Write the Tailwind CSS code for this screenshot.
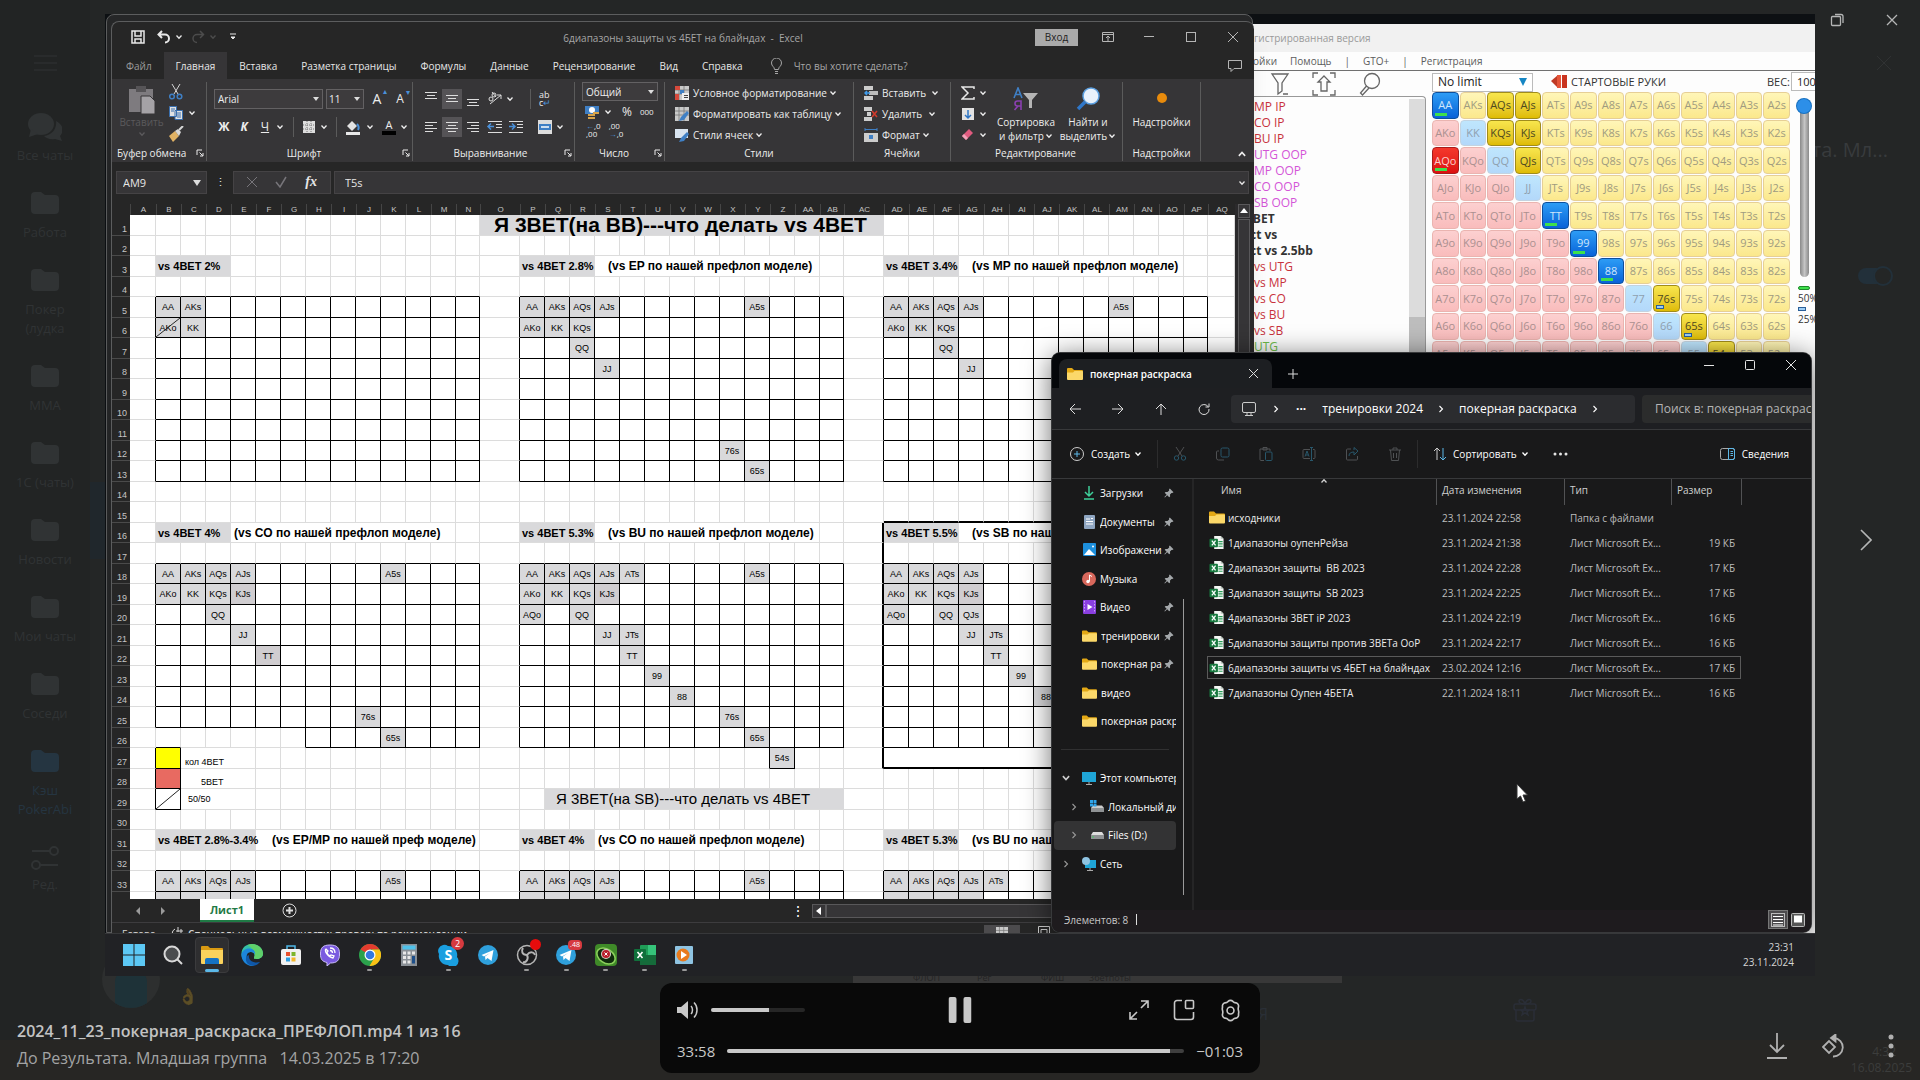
<!DOCTYPE html>
<html lang="ru">
<head>
    <meta charset="UTF-8">
    <meta name="viewport" content="width=device-width, initial-scale=1.0">
    <title>Просмотр видео</title>
    <script src="https://cdn.jsdelivr.net/npm/@tailwindcss/browser@4"></script>
</head>
<body class="relative h-screen overflow-hidden bg-[#242626] font-['Open_Sans','Noto_Sans',sans-serif] text-[10px] leading-4 text-white">

    <!-- Общие иконки -->
    <svg class="hidden">
        <symbol id="chev" viewBox="0 0 8 8"><path d="M1.5 2.5 4 5.2 6.5 2.5" fill="none" stroke="currentColor" stroke-width="1.3"/></symbol>
        <symbol id="chevRight" viewBox="0 0 8 8"><path d="M2.5 1 5.5 4 2.5 7" fill="none" stroke="currentColor" stroke-width="1.1"/></symbol>
        <symbol id="folder" viewBox="0 0 16 14"><path d="M0 2a1 1 0 0 1 1-1h4l2 2h8a1 1 0 0 1 1 1v3H0z" fill="#e3a815"/><path d="M0 5.5h6L7.5 4H15a1 1 0 0 1 1 1v7a1 1 0 0 1-1 1H1a1 1 0 0 1-1-1z" fill="#fbd869"/></symbol>
        <symbol id="xls" viewBox="0 0 16 16"><path d="M5 1h7l3 3v11H5z" fill="#f5f7f5"/><path d="M12 1v3h3z" fill="#b7c4bb"/><path d="M9.5 7H14M9.5 9.5H14M9.5 12H14" stroke="#2a9d58" stroke-width="1.3"/><rect x="0" y="4" width="9" height="9" rx="1" fill="#18793f"/><path d="m2.500 6 4 5m0-5-4 5" stroke="#fff" stroke-width="1.4"/></symbol>
        <symbol id="pin" viewBox="0 0 10 10"><path d="M5.8.5 9.500 4.200 8.300 5.100l-.8-.2-1.500 1.600.1 1.900-.9.900-2-2L.900 9.500.400 9l2.200-2.300L.700 4.800l.9-.9 1.900.1L5.200 2.400 5 1.600z" fill="#a4a8ab"/></symbol>
        <symbol id="launch" viewBox="0 0 8 8"><path d="M1 6V1h5M3.500 3.500 6.800 6.800M7 4v3H4" fill="none" stroke="currentColor"/></symbol>
        <symbol id="dirFolder" viewBox="0 0 28 22"><path d="M0 4a4 4 0 0 1 4-4h6l4 3h10a4 4 0 0 1 4 4v11a4 4 0 0 1-4 4H4a4 4 0 0 1-4-4z" fill="currentColor"/></symbol>
        <symbol id="sheetIcon" viewBox="0 0 14 14"><path d="M0 0h14v14H0z" fill="#c9c9c9"/><path d="M0 4h14M0 8h14M4 0v14M9 0v14" stroke="#777" stroke-width=".8"/></symbol>
    </svg>

    <!-- Затемнённый чат под просмотром -->
    <nav id="folders" class="absolute inset-y-0 left-0 w-[90px] bg-[#222424] pt-[55px] text-center text-[13px] leading-[19px] text-[#303334]"></nav>
    <div class="absolute inset-x-0 bottom-0 h-10 bg-[#272624]"></div>
    <div class="absolute left-[90px] top-[482px] h-[77px] w-4 bg-[#20272c]"></div>
    <div class="absolute left-[853px] top-[970px] flex h-[13px] w-[489px] bg-[#383838] pl-11 text-[9px] text-[#242424]"><span class="w-16 pl-4">ФЛОП</span><span class="w-16 pl-4">Рег</span><span class="w-16 pl-4">ФИШ</span><span>3бетпоты</span></div>
    <div class="absolute left-[102px] top-[950px] size-[58px] overflow-hidden rounded-full bg-[#2d2f2f]"><div class="mx-auto mt-5 h-10 w-8 rounded-t-xl bg-[#1e3238]"></div></div>
    <div class="absolute left-[178px] top-[986px] text-base leading-5 opacity-25">👌</div>
    <div class="absolute right-8 top-[136px] text-xl leading-7 text-[#383b3d]">та. Мл...</div>
    <svg class="absolute right-6 top-[264px] h-6 w-10" viewBox="0 0 40 24" fill="none"><rect x="2" y="4" width="30" height="16" rx="8" fill="#22303a"/><circle cx="27" cy="12" r="9" fill="#242626" stroke="#22303a" stroke-width="2"/></svg>
    <svg class="absolute right-7 top-[55px] size-4 text-[#303233]" viewBox="0 0 16 16"><path d="m1 1 14 14M15 1 1 15" stroke="currentColor"/></svg>
    <svg class="absolute left-[1513px] top-[998px] size-6 text-[#2a2e37]" viewBox="0 0 24 24" fill="none" stroke="currentColor" stroke-width="1.5"><rect x="1" y="6" width="22" height="6" rx="2"/><path d="M3 12v9a2 2 0 0 0 2 2h14a2 2 0 0 0 2-2v-9M12 6C9 6 6 5 6 3s4-3 6 3c2-6 6-5 6-3s-3 3-6 3m0 3 1 3h3l-2 2 1 3-3-2-3 2 1-3-2-2h3z"/></svg>
    <div class="absolute bottom-1 right-2 text-right text-xs text-[#3c3d3c]"><p class="pr-4">4:32</p><p>16.08.2025</p></div>
    <div class="absolute left-[1258px] top-[1002px] text-base text-[#2a2f36]">Я</div>

    <!-- Кнопки окна -->
    <div class="absolute right-5 top-3 flex items-center gap-[38px] text-[#b5b6b6]">
        <button aria-label="Развернуть"><svg class="size-4" viewBox="0 0 16 16" fill="none" stroke="currentColor" stroke-width="1.3"><rect x="1.500" y="4.500" width="9" height="9" rx="1"/><path d="M5 2.500h6a2 2 0 0 1 2 2V11"/></svg></button>
        <button aria-label="Закрыть"><svg class="size-4" viewBox="0 0 16 16" fill="none" stroke="currentColor" stroke-width="1.3"><path d="m3 3 10 10M13 3 3 13"/></svg></button>
    </div>
    <button aria-label="Следующее" class="absolute right-12 top-[528px] text-[#b5b6b6]"><svg class="h-6 w-3" viewBox="0 0 12 24" fill="none" stroke="currentColor" stroke-width="1.6"><path d="m1 2 10 10L1 22"/></svg></button>

    <!-- Кадр видео -->
    <main class="absolute left-[105px] top-[14px] h-[962px] w-[1710px] overflow-hidden bg-[#0d1013]">

        <!-- Окно с диапазонами рук -->
        <section class="absolute left-[1100px] right-0 top-[10px] h-[909px] bg-[#fdfdfd] font-['Open_Sans'] text-[#333]">
            <div class="flex h-7 items-center bg-[#f1f1f1] pl-[49px] text-[#9a9a9a]">гистрированная версия</div>
            <div class="flex h-[19px] items-center gap-[13px] border-b border-[#707070] pl-[44px] text-[#5c5c5c]"><span class="w-7 text-right">ойки</span><span>Помощь</span><span>|</span><span>GTO+</span><span>|</span><span>Регистрация</span></div>
            <div class="flex pl-[49px]">
                <div class="w-[172px]">
                    <div class="flex h-[25px] items-center gap-[22px] pl-4 text-[#666]">
                        <svg class="h-6 w-5" viewBox="0 0 20 24" fill="none" stroke="currentColor" stroke-width="1.3"><path d="M2 2h16l-6 9v8l-4 3V11zM13 22h5"/></svg>
                        <svg class="size-6" viewBox="0 0 24 24" fill="none" stroke="currentColor" stroke-width="1.3"><path d="M1 6V1h5M18 1h5v5M23 18v5h-5M6 23H1v-5M12 4l6 6h-3v9H9v-9H6z"/></svg>
                        <svg class="size-6" viewBox="0 0 24 24" fill="none" stroke="currentColor" stroke-width="1.3"><circle cx="14" cy="9" r="7.500"/><path d="m8.500 14-6 7 2 2 6.500-7"/></svg>
                    </div>
                    <div class="flex h-[500px] overflow-hidden rounded-tr border-r border-t border-[#999] pt-[2px]">
                        <ul id="ranges" class="w-[156px] text-xs leading-4 text-[#c8323c]"></ul>
                        <div class="w-4 bg-[#dcdcdc] pt-[218px]"><div class="h-40 bg-[#bdbdbd]"></div></div>
                    </div>
                </div>
                <div class="w-[364px] pl-[6px]">
                    <div class="flex h-[21px] items-center pt-px text-xs">
                        <select aria-label="Лимит" class="h-[19px] w-[101px] appearance-none border border-[#bbb] bg-white pl-[5px] leading-4 text-[#222]"><option>No limit</option></select>
                        <svg class="-ml-[14px] size-2" viewBox="0 0 8 8"><path d="M0 0h8L4 8z" fill="#1686c4"/></svg>
                        <svg class="ml-6 h-[14px] w-4" viewBox="0 0 16 14"><path d="M0 6 7 0v13z" fill="#bf3a25"/><rect x="6" width="4" height="13" fill="#e55438"/><rect x="11" width="5" height="13" fill="#c9341f"/></svg>
                        <span class="ml-1 text-[11px]">СТАРТОВЫЕ РУКИ</span>
                        <label for="weight" class="ml-auto text-[11px]">ВЕС:</label>
                    </div>
                    <div id="hands" class="grid h-[358px] w-[358px] grid-cols-13 grid-rows-13 gap-px text-[11px]"></div>
                </div>
                <div class="w-6">
                    <input id="weight" value="100" class="ml-px mt-px h-[19px] w-9 border border-[#bbb] bg-white pl-[5px] text-[11px] text-[#222]">
                    <div class="relative ml-[6px] mt-2 h-[178px] w-4"><div class="mx-auto h-full w-[9px] rounded-full bg-gradient-to-r from-[#8a8a8a] via-[#c5c5c5] to-[#8a8a8a]"></div><div class="absolute left-px top-0 size-[14px] rounded-full bg-[#2d8fe8] ring-1 ring-[#1670c0]"></div></div>
                    <div class="ml-2 mt-[9px] h-1 w-3 rounded-sm border border-[#1d8a2a] bg-[#3ee04c]"></div>
                    <div class="ml-2 leading-[17px]">50%</div>
                    <div class="ml-2 h-1 w-2 border border-[#2a5f98] bg-[#9ccdf5]"></div>
                    <div class="ml-2 leading-[17px]">25%</div>
                </div>
            </div>
        </section>

        <!-- Второе окно Excel, от него видна только рамка -->
        <div class="absolute left-px top-0 h-[919px] w-[1147px] rounded-t-lg border border-[#5c5d5e] bg-[#262728]"></div>

        <!-- Excel -->
        <section class="absolute left-[6px] top-[7px] flex h-[912px] w-[1143px] flex-col overflow-hidden rounded-t-lg border-l border-t border-[#5c5d5e] bg-[#262626] shadow-xl">
            <header class="relative flex h-[30px] shrink-0 items-center pl-[19px]">
                <div class="flex items-center gap-[6px] text-[#e8e8e8]">
                    <button aria-label="Сохранить"><svg class="size-[14px]" viewBox="0 0 14 14" fill="none" stroke="currentColor" stroke-width="1.5"><path d="M1 1h12v12H1zM4 1v5h6V1M4 13V9h6v4"/></svg></button>
                    <button aria-label="Отменить" class="ml-[6px] flex items-center gap-1"><svg class="h-4 w-[14px]" viewBox="0 0 14 14" fill="none" stroke="currentColor" stroke-width="2"><path d="M5 1 1.500 4.500 5 8M1.500 4.500H8a4 4 0 0 1 0 8"/></svg><svg class="size-2"><use href="#chev"/></svg></button>
                    <button aria-label="Повторить" class="ml-[2px] flex items-center gap-1 text-[#4c4c4c]"><svg class="h-4 w-[14px]" viewBox="0 0 14 14" fill="none" stroke="currentColor" stroke-width="1.5"><path d="m9 1 3.500 3.500L9 8M12.500 4.500H6a4 4 0 0 0 0 8"/></svg><svg class="size-2"><use href="#chev"/></svg></button>
                    <svg class="ml-[6px] size-2" viewBox="0 0 8 8"><path d="M1 1h6M2 4h4L4 6z" fill="currentColor" stroke="currentColor"/></svg>
                </div>
                <h1 class="absolute inset-x-0 top-2 text-center text-[#a5a5a5]">6диапазоны защиты vs 4БЕТ на блайндах&nbsp; -&nbsp; Excel</h1>
                <div class="ml-auto flex items-center pr-4 text-[#b5b5b5]">
                    <button class="mr-6 h-[17px] w-[43px] bg-[#aaaaaa] text-[#222]">Вход</button>
                    <svg class="mr-[30px] size-3" viewBox="0 0 12 12" fill="none" stroke="currentColor"><path d="M.5 1.500h11v9H.5zM.5 3.500h11M6 10V5M4 7l2-2 2 2"/></svg>
                    <svg class="mr-8 h-3 w-[10px]" viewBox="0 0 10 12" fill="none" stroke="currentColor"><path d="M0 5.500h10"/></svg>
                    <svg class="mr-8 size-[10px]" viewBox="0 0 10 10" fill="none" stroke="currentColor"><rect x=".5" y=".5" width="9" height="9"/></svg>
                    <svg class="size-[10px]" viewBox="0 0 10 10" fill="none" stroke="currentColor"><path d="m0 0 10 10M10 0 0 10"/></svg>
                </div>
            </header>
            <nav class="flex h-[27px] shrink-0 items-stretch pl-[2px] text-[#e6e6e6] *:px-3">
                <button class="text-[#9b9b9b]">Файл</button>
                <button class="bg-[#363537]">Главная</button>
                <button>Вставка</button>
                <button>Разметка страницы</button>
                <button>Формулы</button>
                <button>Данные</button>
                <button>Рецензирование</button>
                <button>Вид</button>
                <button>Справка</button>
                <button class="ml-1 flex items-center gap-3 text-[#a5a5a5]"><svg class="h-4 w-[11px]" viewBox="0 0 11 16" fill="none" stroke="currentColor"><path d="M3.500 11.500c0-3-3-3-3-6.500a5 5 0 0 1 10 0c0 3.500-3 3.500-3 6.500zM4 13.500h3M4 15.500h3"/></svg>Что вы хотите сделать?</button>
                <button aria-label="Примечания" class="ml-auto"><svg class="size-[14px]" viewBox="0 0 14 14" fill="none" stroke="#b5b5b5"><path d="M.5 1.500h13v8H6l-3 3v-3H.5z"/></svg></button>
            </nav>

            <!-- Лента -->
            <div class="relative flex h-[83px] shrink-0 bg-[#363537] pt-[3px] pb-px text-[#ededed]">
                <div class="flex w-[95px] flex-col border-r border-[#5b5b5b]">
                    <div class="flex flex-1 gap-[5px] pl-2">
                        <button class="flex w-[43px] flex-col items-center text-[#5b5a5c]"><svg class="mt-1 h-7 w-[26px]" viewBox="0 0 26 28"><path d="M0 3h24v23H0z" fill="#7e7b7f"/><path d="M7 0h10v6H7z" fill="#565457"/><path d="M12 10h9l5 5v13H12z" fill="#a5a2a6" stroke="#363537"/></svg>Вставить<svg class="size-2"><use href="#chev"/></svg></button>
                        <div class="flex flex-col gap-[5px] pt-[2px]">
                            <svg class="size-4" viewBox="0 0 16 16" fill="none" stroke="#d5d5d5"><path d="m4 0 6 10M12 0 6 10"/><circle cx="4" cy="12.500" r="2.300" stroke="#3f7fc4" stroke-width="1.5"/><circle cx="11.500" cy="12.500" r="2.300" stroke="#3f7fc4" stroke-width="1.5"/></svg>
                            <span class="flex items-center gap-1"><svg class="size-4" viewBox="0 0 16 16" fill="#e2e2e2" stroke="#3a6fae"><path d="M1.500 1.500h7v10h-7zM7 5.500h7.500v9H7z"/><path d="M3 4h4M3 6h3M9 8h4M9 10h4M9 12h4"/></svg><svg class="size-2"><use href="#chev"/></svg></span>
                            <svg class="size-4" viewBox="0 0 16 16"><path d="m1 10 6-5 4 5-6 6z" fill="#e0b264"/><path d="m7 5 3-2 3 3-2 4z" fill="#d8d8d8"/><path d="m11 4 4-4" stroke="#d8d8d8" stroke-width="2"/></svg>
                        </div>
                    </div>
                    <div class="flex items-center justify-between pl-[5px] pr-[2px]">Буфер обмена<svg class="size-2"><use href="#launch"/></svg></div>
                </div>
                <div class="flex w-[206px] flex-col border-r border-[#5b5b5b] pl-[7px] pr-[2px]">
                    <div class="mt-[7px] flex h-5 items-center gap-[3px]">
                        <div class="relative"><select aria-label="Шрифт" class="h-5 w-[109px] appearance-none border border-[#636163] bg-[#3d3b3d] pl-[3px] text-[10px]"><option>Arial</option></select><svg class="absolute right-[3px] top-[6px] size-2" viewBox="0 0 8 8"><path d="M1 2h6L4 6z" fill="#ddd"/></svg></div>
                        <div class="relative"><select aria-label="Размер" class="h-5 w-[38px] appearance-none border border-[#636163] bg-[#3d3b3d] pl-[2px] text-[10px]"><option>11</option></select><svg class="absolute right-[3px] top-[6px] size-2" viewBox="0 0 8 8"><path d="M1 2h6L4 6z" fill="#ddd"/></svg></div>
                        <button class="relative w-5 text-sm">A<span class="absolute -top-1 right-0 text-[8px] text-[#4a90d9]">▴</span></button>
                        <button class="relative w-5 text-xs">A<span class="absolute -top-1 right-0 text-[8px] text-[#4a90d9]">▾</span></button>
                    </div>
                    <div class="mt-2 flex h-5 items-center text-xs">
                        <button class="w-5 font-bold">Ж</button><button class="w-5 font-bold italic">К</button><button class="w-[22px] underline">Ч</button><svg class="mr-1 size-2"><use href="#chev"/></svg>
                        <span class="mx-[5px] h-5 w-px bg-[#5b5b5b]"></span>
                        <svg class="ml-1 size-3" viewBox="0 0 12 12"><path d="M0 0h12v12H0z" fill="#ddd"/><path d="M0 4h12M0 8h12M4 0v12M8 0v12" stroke="#777" stroke-dasharray="1 1"/></svg><svg class="ml-[5px] size-2"><use href="#chev"/></svg>
                        <span class="mx-2 h-5 w-px bg-[#5b5b5b]"></span>
                        <svg class="size-4" viewBox="0 0 16 16"><path d="m2 7 5-5 5 5-5 5z" fill="#e2e2e2"/><path d="M12 5c2 2 2 4 1 6" stroke="#4a90d9" stroke-width="2" fill="none"/><path d="M1 13h14v3H1z" fill="#e8e8e8"/></svg><svg class="ml-[5px] size-2"><use href="#chev"/></svg>
                        <span class="ml-2 w-[14px] border-b-4 border-black text-center text-[11px] leading-3">A</span><svg class="ml-1 size-2"><use href="#chev"/></svg>
                    </div>
                    <div class="mt-auto flex items-center"><span class="flex-1 pr-2 text-center">Шрифт</span><svg class="size-2"><use href="#launch"/></svg></div>
                </div>
                <div class="flex w-[162px] flex-col border-r border-[#5b5b5b] pl-2 pr-[2px]">
                    <div class="mt-[7px] flex h-5 items-center">
                        <svg class="size-5" viewBox="0 0 20 20" stroke="#ddd"><path d="M4 3.500h12M6 6.500h8M4 9.500h12"/></svg>
                        <svg class="ml-px size-5 bg-[#555356]" viewBox="0 0 20 20" stroke="#ddd"><path d="M4 6.500h12M6 9.500h8M4 12.500h12"/></svg>
                        <svg class="ml-px size-5" viewBox="0 0 20 20" stroke="#ddd"><path d="M4 10.500h12M6 13.500h8M4 16.500h12"/></svg>
                        <svg class="ml-[2px] size-5" viewBox="0 0 20 20" fill="none" stroke="#ddd"><circle cx="6" cy="10" r="2"/><circle cx="9" cy="6" r="2"/><path d="m7 3 4 5M5 15 16 6M16 10V6h-4"/></svg><svg class="ml-px size-2"><use href="#chev"/></svg>
                        <span class="ml-4 h-5 w-px bg-[#5b5b5b]"></span><span class="ml-2 text-[9px] leading-2">ab<br>c<span class="text-[#4a90d9]">↵</span></span>
                    </div>
                    <div class="mt-2 flex h-5 items-center">
                        <svg class="size-5" viewBox="0 0 20 20" stroke="#ddd"><path d="M4 5.500h12M4 8.500h8M4 11.500h12M4 14.500h8"/></svg>
                        <svg class="ml-px size-5 bg-[#555356]" viewBox="0 0 20 20" stroke="#ddd"><path d="M4 5.500h12M6 8.500h8M4 11.500h12M6 14.500h8"/></svg>
                        <svg class="ml-px size-5" viewBox="0 0 20 20" stroke="#ddd"><path d="M4 5.500h12M8 8.500h8M4 11.500h12M8 14.500h8"/></svg>
                        <svg class="ml-[2px] size-5" viewBox="0 0 20 20" stroke="#ddd" fill="none"><path d="M3 4.500h14M11 7.500h6M11 10.500h6M3 15.500h14"/><path d="M9 9.500H3m3-3-3 3 3 3" stroke="#4a90d9" stroke-width="1.5"/></svg>
                        <svg class="ml-px size-5" viewBox="0 0 20 20" stroke="#ddd" fill="none"><path d="M3 4.500h14M11 7.500h6M11 10.500h6M3 15.500h14"/><path d="M3 9.500h6m-3-3 3 3-3 3" stroke="#4a90d9" stroke-width="1.5"/></svg>
                        <svg class="ml-3 size-[14px]" viewBox="0 0 14 14"><path d="M0 0h14v14H0z" fill="#ddd"/><path d="M1 4h12v6H1z" fill="#3f7fc4"/><path d="M3 7h8" stroke="#fff" stroke-width="1.5"/></svg><svg class="ml-1 size-2"><use href="#chev"/></svg>
                    </div>
                    <div class="mt-auto flex items-center"><span class="flex-1 pr-1 text-center">Выравнивание</span><svg class="size-2"><use href="#launch"/></svg></div>
                </div>
                <div class="flex w-[90px] flex-col border-r border-[#5b5b5b] pl-[7px] pr-[2px]">
                    <div class="relative w-[76px]"><select aria-label="Формат числа" class="h-[19px] w-[76px] appearance-none border border-[#636163] bg-[#3d3b3d] pl-[3px] text-[10px]"><option>Общий</option></select><svg class="absolute right-[3px] top-[6px] size-2" viewBox="0 0 8 8"><path d="M1 2h6L4 6z" fill="#ddd"/></svg></div>
                    <div class="mt-[2px] flex h-[18px] items-center"><svg class="ml-[3px] size-[15px]" viewBox="0 0 15 15"><path d="M0 1h14v8H0z" fill="#3f7fc4"/><circle cx="7" cy="5" r="3" fill="#fff"/><path d="M3 9h7v2H3zM3 12h7v2H3zM8 7h6v2H8z" fill="#d9a44a"/></svg><svg class="ml-1 size-2"><use href="#chev"/></svg><span class="ml-[10px] text-xs">%</span><span class="ml-2 text-[8px]">000</span></div>
                    <div class="mt-px flex h-5 gap-2 pl-1 text-[8px] leading-2"><span><span class="text-[#4a90d9]">←</span>,0<br>,00</span><span>,00<br><span class="text-[#4a90d9]">→</span>,0</span></div>
                    <div class="mt-auto flex items-center"><span class="flex-1 pr-2 text-center">Число</span><svg class="size-2"><use href="#launch"/></svg></div>
                </div>
                <div class="flex w-[189px] flex-col border-r border-[#5b5b5b] px-[10px]">
                    <button class="flex h-[21px] items-center"><svg class="size-[14px]" viewBox="0 0 14 14"><use href="#sheetIcon"/><path d="M0 0h5v4H0zM0 8h4v6H0z" fill="#d64a3c"/><path d="M5 4h4v4H5z" fill="#3f7fc4"/><path d="M7 7h7v7H7z" fill="#eee"/><path d="M9 9.500h4M9 11.500h4" stroke="#444"/></svg><span class="ml-1">Условное форматирование</span><svg class="ml-[2px] size-2"><use href="#chev"/></svg></button>
                    <button class="flex h-[21px] items-center"><svg class="size-[14px]" viewBox="0 0 14 14"><use href="#sheetIcon"/><path d="m6 10 6-6 2 2-5 7-5 1z" fill="#3f7fc4"/></svg><span class="ml-1">Форматировать как таблицу</span><svg class="ml-[2px] size-2"><use href="#chev"/></svg></button>
                    <button class="flex h-[21px] items-center"><svg class="size-[14px]" viewBox="0 0 14 14"><path d="M0 1h13v9H0z" fill="#d8e3ee"/><path d="m6 10 6-6 2 2-5 7-5 1z" fill="#3f7fc4"/></svg><span class="ml-1">Стили ячеек</span><svg class="ml-[2px] size-2"><use href="#chev"/></svg></button>
                    <div class="mt-auto text-center">Стили</div>
                </div>
                <div class="flex w-[97px] flex-col border-r border-[#5b5b5b] px-[10px]">
                    <button class="flex h-[21px] items-center"><svg class="size-[14px]" viewBox="0 0 14 14"><path d="M0 0h9v4H0zM0 10h9v4H0z" fill="#ccc"/><path d="M5 5h9v4H5z" fill="#bbb"/><path d="M6 7H1m2-2L1 7l2 2" stroke="#3f9bea" stroke-width="1.5" fill="none"/></svg><span class="ml-1">Вставить</span><svg class="ml-auto mr-px size-2"><use href="#chev"/></svg></button>
                    <button class="flex h-[21px] items-center"><svg class="size-[14px]" viewBox="0 0 14 14"><path d="M0 0h8v4H0zM0 10h8v4H0zM3 5h4v4H3z" fill="#ccc"/><path d="m8 4 5 6m0-6-5 6" stroke="#d03a2c" stroke-width="1.6"/></svg><span class="ml-1">Удалить</span><svg class="ml-auto mr-1 size-2"><use href="#chev"/></svg></button>
                    <button class="flex h-[21px] items-center"><svg class="size-[14px]" viewBox="0 0 14 14"><path d="M0 5h14v9H0z" fill="#ccc"/><path d="M5 7h4v4H5z" fill="#3f7fc4"/><path d="M1 0v3M13 0v3M1 1.500h12" stroke="#3f7fc4"/></svg><span class="ml-1">Формат</span><svg class="ml-[2px] size-2"><use href="#chev"/></svg></button>
                    <div class="mt-auto text-center">Ячейки</div>
                </div>
                <div class="flex w-[172px] flex-col border-r border-[#5b5b5b] pl-[10px]">
                    <div class="flex h-[63px] leading-[14px]">
                        <div class="flex w-[34px] flex-col *:flex *:h-[21px] *:items-center *:gap-1">
                            <span><svg class="size-[14px]" viewBox="0 0 14 14" fill="none" stroke="#e8e8e8" stroke-width="1.5"><path d="M13 3V1H1l6 6-6 6h12v-2"/></svg><svg class="size-2"><use href="#chev"/></svg></span>
                            <span><svg class="size-[14px]" viewBox="0 0 14 14"><path d="M1 1h12v12H1z" fill="#e2e2e2"/><path d="M7 3v8M4 8l3 3 3-3" stroke="#2d74c4" stroke-width="1.5" fill="none"/></svg><svg class="size-2"><use href="#chev"/></svg></span>
                            <span><svg class="size-[14px]" viewBox="0 0 14 14"><path d="m1 8 7-7 4 4-7 7z" fill="#e05b7f"/><path d="m1 8 2-2 4 4-2 2z" fill="#f0a3b8"/></svg><svg class="size-2"><use href="#chev"/></svg></span>
                        </div>
                        <button class="flex w-[62px] flex-col items-center"><svg class="mb-1 mt-[5px] h-6 w-[26px] shrink-0" viewBox="0 0 26 24" fill="none"><path d="m1 11 4-10 4 10M2.500 7.500h5" stroke="#3f7fc4" stroke-width="1.6"/><path d="M8 23v-9H4.500a2.500 2.500 0 0 0 0 5H8M5 19l-3.500 4" stroke="#8a3fb0" stroke-width="1.6"/><path d="M10 6h15l-6 7v8h-3v-8z" fill="#b5b5b5"/></svg>Сортировка<span class="flex items-center gap-px">и фильтр<svg class="size-2"><use href="#chev"/></svg></span></button>
                        <button class="flex w-[62px] flex-col items-center"><svg class="mb-1 mt-[5px] size-6 shrink-0" viewBox="0 0 24 24"><circle cx="15" cy="9" r="8" fill="#e8f1fb" stroke="#5b9fe0" stroke-width="1.5"/><path d="M9 15 2 22" stroke="#2f77c9" stroke-width="3.5"/></svg>Найти и<span class="flex items-center gap-px">выделить<svg class="size-2"><use href="#chev"/></svg></span></button>
                    </div>
                    <div class="mt-auto pr-3 text-center">Редактирование</div>
                </div>
                <div class="flex w-[78px] flex-col items-center border-r border-[#5b5b5b]">
                    <div class="mt-[11px] size-[10px] rounded-full bg-[#e88b0c]"></div>
                    <div class="mt-[11px]">Надстройки</div>
                    <div class="mt-auto">Надстройки</div>
                </div>
                <svg class="absolute bottom-[3px] right-[7px] size-[10px] rotate-180"><use href="#chev"/></svg>
            </div>

            <!-- Строка формул -->
            <div class="flex h-[42px] shrink-0 items-center gap-[3px] pb-[2px] pl-1 pr-[5px] text-[11px] text-[#e6e6e6]">
                <div class="relative"><input aria-label="Имя ячейки" value="AM9" class="h-[23px] w-[91px] border border-[#454345] bg-[#363537] pl-[6px]"><svg class="absolute right-[6px] top-[8px] size-2" viewBox="0 0 8 8"><path d="M0 1h8L4 7z" fill="#ddd"/></svg></div>
                <span class="w-5 text-center">⋮</span>
                <div class="flex h-[23px] w-[98px] items-center justify-around border border-[#454345] bg-[#363537] px-1"><svg class="size-[10px]" viewBox="0 0 10 10" stroke="#77757a"><path d="m0 0 10 10M10 0 0 10"/></svg><svg class="size-3" viewBox="0 0 12 12" fill="none" stroke="#77757a" stroke-width="1.5"><path d="m1 6 4 5 6-10"/></svg><span class="font-['Liberation_Serif'] text-sm font-bold italic">fx</span></div>
                <div class="relative flex-1"><input aria-label="Формула" value="T5s" class="h-[23px] w-full border border-[#454345] bg-[#363537] pl-[10px]"><svg class="absolute right-[3px] top-[8px] size-2"><use href="#chev"/></svg></div>
            </div>

            <!-- Лист -->
            <div class="flex h-[695px] shrink-0 overflow-hidden">
                <div class="w-[1123px] overflow-hidden bg-white">
                    <table id="sheet" class="w-[1123px] table-fixed border-separate border-spacing-0 font-['Liberation_Sans',Arial,sans-serif] text-[9px] leading-3 text-black"></table>
                </div>
                <div class="flex-1 bg-[#2b2a2c] pl-[3px]"><div class="flex h-[14px] w-[12px] items-center justify-center border border-[#59585a] bg-[#363537]"><svg class="size-2" viewBox="0 0 8 8"><path d="M0 6h8L4 1z" fill="#fff"/></svg></div><div class="mt-px h-full w-[12px] border border-[#59585a] bg-[#363537]"></div></div>
            </div>
            <div class="flex h-[23px] shrink-0 items-center">
                <svg class="ml-[23px] h-2 w-[33px]" viewBox="0 0 33 8" fill="#9a9a9a"><path d="M5 0v8L1 4zM26 0v8l4-4z"/></svg>
                <button class="ml-8 h-[23px] w-[54px] border-b-2 border-[#1f7a45] bg-white text-[11px] font-bold text-[#1f7a45]">Лист1</button>
                <svg class="ml-7 size-[15px]" viewBox="0 0 15 15" fill="none" stroke="#ddd"><circle cx="7.500" cy="7.500" r="6.500"/><path d="M7.500 4v7M4 7.500h7" stroke-width="2"/></svg>
                <span class="ml-[493px] w-4 text-center text-sm">⋮</span>
                <div class="ml-[6px] flex size-[14px] items-center justify-center border border-[#59585a] bg-[#363537]"><svg class="size-2" viewBox="0 0 8 8"><path d="M6 0v8L1 4z" fill="#fff"/></svg></div><div class="h-[14px] w-[400px] border border-[#59585a] bg-[#363537]"></div>
            </div>
            <div class="flex h-[14px] shrink-0 items-start overflow-hidden border-t border-[#3d3c3e] pl-[10px] pt-[3px] leading-4 text-[#d5d5d5]"><span class="w-12">Готово</span><svg class="h-4 w-[14px]" viewBox="0 0 14 16" fill="none" stroke="#d5d5d5"><path d="M5 3a5 5 0 0 0 0 9M8 1v5M11 3v4M6 5h7"/></svg><span class="ml-1 font-semibold">Специальные возможности: проверьте рекомендации</span>
                <span class="ml-auto mr-[204px] flex gap-[18px]"><span class="-mt-px h-4 w-[36px] bg-[#4c4b4d] px-3 pt-[2px]"><svg class="size-3"><use href="#sheetIcon"/></svg></span><svg class="size-3" viewBox="0 0 12 12" fill="none" stroke="#ccc"><path d="M.5.500h11v11H.5zM3 3.500h6v6H3z"/></svg></span>
            </div>
        </section>

        <!-- Проводник -->
        <section class="absolute left-[947px] top-[339px] flex h-[579px] w-[759px] flex-col overflow-hidden rounded-lg bg-[#19191a] shadow-[0_4px_28px_rgba(0,0,0,0.6)] ring-1 ring-[#38393b]">
            <header class="flex h-[35px] shrink-0 items-end bg-[#05070a] pl-[7px]">
                <div class="flex h-[29px] w-[213px] items-center rounded-t-lg bg-[#1d1f22] pl-2 pr-[14px] font-semibold"><svg class="h-[14px] w-4"><use href="#folder"/></svg><span class="ml-[7px]">покерная раскраска</span><svg class="ml-auto size-[9px]" viewBox="0 0 9 9" stroke="#ddd"><path d="m0 0 9 9M9 0 0 9"/></svg></div>
                <svg class="mb-[9px] ml-4 size-[10px]" viewBox="0 0 10 10" stroke="#ddd"><path d="M5 0v10M0 5h10"/></svg>
                <div class="mb-[18px] ml-auto flex items-center gap-[31px] pr-[15px]"><svg class="size-[10px]" viewBox="0 0 10 10" stroke="#e5e5e5"><path d="M0 5.500h10"/></svg><svg class="size-[10px]" viewBox="0 0 10 10" fill="none" stroke="#e5e5e5"><rect x=".5" y=".5" width="9" height="9" rx="1"/></svg><svg class="size-[10px]" viewBox="0 0 10 10" stroke="#e5e5e5"><path d="m0 0 10 10M10 0 0 10"/></svg></div>
            </header>
            <div class="flex h-[42px] shrink-0 items-center border-b border-[#38393b] bg-[#1e1f22] pl-[17px]">
                <div class="flex gap-[31px]">
                    <svg class="size-3" viewBox="0 0 12 12" fill="none" stroke="#ddd"><path d="M12 6H1m5-5L1 6l5 5"/></svg>
                    <svg class="size-3" viewBox="0 0 12 12" fill="none" stroke="#ddd"><path d="M0 6h11M6 1l5 5-5 5"/></svg>
                    <svg class="size-3" viewBox="0 0 12 12" fill="none" stroke="#ddd"><path d="M6 12V1M1 6l5-5 5 5"/></svg>
                    <svg class="size-3" viewBox="0 0 12 12" fill="none" stroke="#ddd"><path d="M10 3.500A5 5 0 1 0 11 6M11 .5V4H7.500"/></svg>
                </div>
                <div class="ml-[21px] flex h-7 w-[404px] shrink-0 items-center rounded bg-[#2b2c2f] pl-[11px] text-xs">
                    <svg class="size-[14px]" viewBox="0 0 14 14" fill="none" stroke="#ccc"><rect x=".5" y=".5" width="13" height="10" rx="1.500"/><path d="M5 11v2m4-2v2M3 13.500h8"/></svg>
                    <svg class="ml-4 size-2"><use href="#chevRight"/></svg><span class="ml-4 font-bold">···</span><span class="ml-4">тренировки 2024</span><svg class="ml-[14px] size-2"><use href="#chevRight"/></svg><span class="ml-[14px]">покерная раскраска</span><svg class="ml-[14px] size-2"><use href="#chevRight"/></svg>
                </div>
                <input aria-label="Поиск" value="Поиск в: покерная раскраска" class="ml-[7px] h-7 w-52 shrink-0 rounded bg-[#2b2c2c] pl-[13px] text-xs text-[#b5b5b5]">
            </div>
            <div class="flex h-[49px] shrink-0 items-center border-b border-[#38393b] pl-[18px]">
                <button class="flex items-center"><svg class="size-[14px]" viewBox="0 0 14 14" fill="none" stroke="#ccc"><circle cx="7" cy="7" r="6.500"/><path d="M7 4v6M4 7h6" stroke="#5cb8e8"/></svg><span class="ml-[7px]">Создать</span><svg class="ml-1 size-2"><use href="#chev"/></svg></button>
                <span class="mx-[15px] h-7 w-px bg-[#2c2c2d]"></span>
                <div class="flex gap-[29px]" id="commands">
                    <svg class="size-[14px]" viewBox="0 0 14 14" fill="none" stroke="#4f5153"><path d="m3 0 6 9M11 0 5 9"/><g stroke="#28576b"><circle cx="3.500" cy="11" r="2.200"/><circle cx="10.500" cy="11" r="2.200"/></g></svg>
                    <svg class="size-[14px]" viewBox="0 0 14 14" fill="none" stroke="#4f5153"><path d="M3 4H1.500A1 1 0 0 0 .5 5v6a2 2 0 0 0 2 2H8"/><rect x="5" y="1" width="8" height="9" rx="1.500" stroke="#28576b"/></svg>
                    <svg class="size-[14px]" viewBox="0 0 14 14" fill="none" stroke="#4f5153"><path d="M5 13.500H2a1 1 0 0 1-1-1V2h10v2M4 .5h4V3H4z"/><rect x="6.500" y="5" width="6.500" height="8.500" rx="1" stroke="#28576b"/></svg>
                    <svg class="size-[14px]" viewBox="0 0 14 14" fill="none" stroke="#4f5153"><path d="M8 2.500H2a1 1 0 0 0-1 1v7a1 1 0 0 0 1 1h6m3-9h1a1 1 0 0 1 1 1v7a1 1 0 0 1-1 1h-1"/><path d="M9.500.500v13m-1.500-13h3m-3 13h3M3 9.500 5 4l2 5.500M4 8h2" stroke="#28576b"/></svg>
                    <svg class="size-[14px]" viewBox="0 0 14 14" fill="none" stroke="#4f5153"><path d="M6 2H2.500a1 1 0 0 0-1 1v9a1 1 0 0 0 1 1h9a1 1 0 0 0 1-1V9"/><path d="M4 9c0-3 2-4 5-4v3l4-4-4-3.500V3" stroke="#28576b"/></svg>
                    <svg class="size-[14px]" viewBox="0 0 14 14" fill="none" stroke="#4f5153"><path d="M1 3h12M2.500 3l1 10.500h7l1-10.500M5 3V1h4v2M5.500 6v5M8.500 6v5"/></svg>
                </div>
                <span class="mx-[15px] h-7 w-px bg-[#2c2c2d]"></span>
                <button class="flex items-center"><svg class="size-[14px]" viewBox="0 0 14 14" fill="none"><path d="M4 13V1M1 4l3-3 3 3" stroke="#ccc"/><path d="M10 1v12M7 10l3 3 3-3" stroke="#5cb8e8"/></svg><span class="ml-[6px]">Сортировать</span><svg class="ml-1 size-2"><use href="#chev"/></svg></button>
                <svg class="ml-6 h-1 w-[15px]" viewBox="0 0 15 4" fill="#e5e5e5"><circle cx="2" cy="2" r="1.500"/><circle cx="7.500" cy="2" r="1.500"/><circle cx="13" cy="2" r="1.500"/></svg>
                <button class="ml-auto mr-[22px] flex items-center"><svg class="h-3 w-[15px]" viewBox="0 0 15 12" fill="none"><rect x=".5" y=".5" width="14" height="11" rx="2" stroke="#aaa"/><path d="M8.500.500H13a1.500 1.500 0 0 1 1.500 1.500v8a1.500 1.500 0 0 1-1.500 1.500H8.500zM10.500 3.500h2.500m-2.500 2h2.500m-2.500 2h2.500" stroke="#5cb8e8"/></svg><span class="ml-[7px]">Сведения</span></button>
            </div>
            <div class="flex min-h-0 flex-1">
                <div class="flex w-[142px] shrink-0 border-r-2 border-[#252526]">
                    <ul id="places" class="grid h-[399px] w-[124px] grid-rows-14 pl-[2px]"></ul>
                    <div class="ml-[7px] mt-[120px] h-[296px] w-px bg-[#9a9a9a]"></div>
                </div>
                <div>
                    <table class="ml-3 w-[536px] table-fixed border-separate border-spacing-0 text-left whitespace-nowrap text-[#bdbdbd]">
                        <colgroup><col class="w-[231px]"><col class="w-[128px]"><col class="w-[107px]"><col class="w-[70px]"></colgroup>
                        <thead><tr class="h-[26px] text-[#d0d0d0] *:border-r *:border-[#515254] *:pt-[3px] *:align-top *:font-normal"><th class="relative pl-[15px]">Имя<svg class="absolute left-[114px] -top-[2px] size-2 rotate-180"><use href="#chev"/></svg></th><th class="pl-[5px]">Дата изменения</th><th class="pl-[5px]">Тип</th><th class="pl-[5px]">Размер</th></tr></thead>
                        <tbody id="files"></tbody>
                    </table>
                </div>
            </div>
            <footer class="flex h-[22px] shrink-0 items-center bg-[#1e1b1e] pb-[3px] pl-3 pr-[6px] text-[#c8c8c8]">Элементов: 8<span class="ml-2 h-[11px] w-px bg-[#ddd]"></span>
                <span class="ml-auto flex h-[19px] w-5 items-center justify-center border border-[#777] bg-[#4c4a4d]"><svg class="size-[14px]" viewBox="0 0 14 14" stroke="#bbb" fill="none"><rect x=".5" y=".5" width="13" height="13"/><path d="M2 3.500h10M2 6.500h10M2 9.500h10M2 12h10" stroke="#fff"/></svg></span>
                <svg class="ml-[3px] size-[14px]" viewBox="0 0 14 14"><rect x=".5" y=".5" width="13" height="13" rx="1" fill="#555" stroke="#bbb"/><rect x="3" y="2.500" width="8" height="7" fill="#fff"/></svg>
            </footer>
        </section>

        <!-- Панель задач -->
        <div class="absolute inset-x-0 bottom-0 flex h-[43px] items-center justify-between border-t border-[#37383a] bg-[#212225] pl-[9px] pr-[21px]">
            <div class="grid h-full w-[590px] grid-cols-15 *:relative *:flex *:items-center *:justify-center">
                <button aria-label="Пуск"><svg class="size-[22px]" viewBox="0 0 22 22" fill="#5cc8f5"><path d="M0 0h10.500v10.500H0zM11.500 0H22v10.500H11.500zM0 11.500h10.500V22H0zM11.500 11.500H22V22H11.500z"/></svg></button>
                <button aria-label="Поиск"><svg class="size-5" viewBox="0 0 20 20" fill="#4a4c4e" stroke="#d8d8d8" stroke-width="2"><circle cx="9" cy="9" r="7.500"/><path d="m14 14 5 5"/></svg></button>
                <button aria-label="Проводник"><span class="flex h-9 w-[34px] items-center justify-center rounded border border-[#3b3b3d] bg-[#2e2e30]"><svg class="size-[22px]" viewBox="0 0 22 22"><path d="M0 3a1 1 0 0 1 1-1h6l2 2h12a1 1 0 0 1 1 1v6H0z" fill="#d99a12"/><path d="M0 6h22v13a1 1 0 0 1-1 1H1a1 1 0 0 1-1-1z" fill="#fad25c"/><path d="M4 20v-4a2 2 0 0 1 2-2h10a2 2 0 0 1 2 2v4z" fill="#1573c4"/></svg></span><i class="absolute bottom-1 h-[3px] w-[14px] rounded bg-[#5cb8e8]"></i></button>
                <button aria-label="Edge"><svg class="size-[22px]" viewBox="0 0 22 22"><path d="M.5 11C0 4 5 0 11 0c7 0 11 5 11 9.500 0 4-3.500 5.500-6.500 5.500-2 0-3-1-2.300-2 1.300-2-.2-5-3.700-5C5 8 2 11 2 15 1 14 .6 12.500.5 11z" fill="#35bfa8"/><path d="M11 0c7 0 11 5 11 9.500 0 4-3.500 5.500-6.500 5.500-2 0-3-1-2.300-2C15 9 12 4 6.500 1 8 .3 9.500 0 11 0z" fill="#5fd06a"/><path d="M.5 10C2 5.500 6 4 9 4.500c4 .5 5.500 3.500 5 6C13 8.500 11.500 8 9.500 8 6 8 5 12 6 15s4 6.500 8 6.500C7 23.500 0 18 .5 10z" fill="#1c86dc"/><path d="M8 11c-1 4 3 9 11 7-3 4-9 5-12.500 1.500C3.500 16 5 11.500 8 11z" fill="#0f57a8"/></svg></button>
                <button aria-label="Store"><svg class="size-[22px]" viewBox="0 0 22 22"><path d="M7 5V2h8v3" fill="none" stroke="#4fb8e8" stroke-width="1.5"/><rect x="1" y="5" width="20" height="16" rx="2" fill="#f1f1f1"/><path d="M6 8h4v4H6z" fill="#e8502c"/><path d="M11.500 8h4v4h-4z" fill="#7cb52c"/><path d="M6 13.500h4v4H6z" fill="#2a9de0"/><path d="M11.500 13.500h4v4h-4z" fill="#f3b72c"/></svg></button>
                <button aria-label="Viber"><svg class="size-[22px]" viewBox="0 0 22 22"><path d="M11 1c7 0 9.500 2.500 9.500 9S18 19 11.500 19L8 22v-3.500C3 17.500 1.500 15 1.500 10 1.500 3.500 4 1 11 1z" fill="#7a5ae0" stroke="#c9bdf5"/><path d="M7 5c-2 1 1 8 7 9l1-2-3-1-1 1c-2-1-3-3-3-4l1-1zM11 4c3 0 5 2 5 5M11 6.500c1.500 0 2.500 1 2.500 2.500" fill="none" stroke="#fff" stroke-width="1.3"/></svg></button>
                <button aria-label="Chrome"><svg class="size-[22px]" viewBox="0 0 22 22"><circle cx="11" cy="11" r="11" fill="#2ba24c"/><path d="M11 11 1.500 5.500A11 11 0 0 1 20.500 5.500H11z" fill="#e33b2e"/><path d="M20.500 5.500A11 11 0 0 1 10.500 22l5-8.500L13 5.500z" fill="#fbc116"/><circle cx="11" cy="11" r="5.500" fill="#fff"/><circle cx="11" cy="11" r="4.300" fill="#3478e0"/></svg><i class="absolute bottom-[5px] h-[2px] w-[5px] rounded bg-[#999]"></i></button>
                <button aria-label="Калькулятор"><svg class="h-[22px] w-4" viewBox="0 0 16 22"><path d="M0 0h16v22H0z" fill="#8a9096"/><path d="M1.500 1.500h13v4h-13z" fill="#4fc1ea"/><path d="M2 7.500h3v3H2zM6.500 7.500h3v3h-3zM11 7.500h3v3h-3zM2 12h3v3H2zM6.500 12h3v3h-3zM2 16.500h3v3H2zM6.500 16.500h3v3h-3z" fill="#e8e8e8"/><path d="M11 12h3v7.500h-3z" fill="#1d4f8a"/></svg></button>
                <button aria-label="Skype"><svg class="size-[22px]" viewBox="0 0 22 22"><path d="M6 1a6 6 0 0 1 5 1 9 9 0 0 1 9 11 6 6 0 0 1-9 8A9 9 0 0 1 2 10 6 6 0 0 1 6 1z" fill="#1a9fe0"/></svg><b class="absolute text-sm">S</b><em class="absolute right-1 top-[3px] size-[13px] rounded-full bg-[#d63a3f] text-[9px] leading-[13px] not-italic">2</em><i class="absolute bottom-[5px] h-[2px] w-[5px] rounded bg-[#999]"></i></button>
                <button aria-label="Telegram"><svg class="size-5" viewBox="0 0 20 20"><circle cx="10" cy="10" r="10" fill="#2fa0dc"/><path d="m3.500 10 12-5-2 11-4-3-2 2-.5-3.500L12 8l-6 3.500z" fill="#fff"/></svg></button>
                <button aria-label="OBS"><svg class="size-[22px]" viewBox="0 0 22 22" fill="none" stroke="#b5b5b5"><circle cx="11" cy="11" r="9.500" fill="#1c1c1e" stroke-width="1.5"/><path d="M11 11c-5 0-6-4-4-7M11 11c3-4 7-3 8 0M11 11c2 4-1 8-4 7" stroke-width="2"/></svg><em class="absolute right-[6px] top-[5px] size-[11px] rounded-full bg-[#e80c0c]"></em><i class="absolute bottom-[5px] h-[2px] w-[5px] rounded bg-[#999]"></i></button>
                <button aria-label="Telegram 2"><svg class="size-5" viewBox="0 0 20 20"><circle cx="10" cy="10" r="10" fill="#2fa0dc"/><path d="m3.500 10 12-5-2 11-4-3-2 2-.5-3.500L12 8l-6 3.500z" fill="#fff"/></svg><em class="absolute right-1 top-[6px] h-[10px] w-[14px] rounded-sm bg-[#d63a3f] text-[7px] leading-[10px] not-italic">.48</em><i class="absolute bottom-[5px] h-[2px] w-[5px] rounded bg-[#999]"></i></button>
                <button aria-label="Poker"><svg class="size-[22px]" viewBox="0 0 22 22"><rect width="22" height="22" rx="4" fill="#3f8a28"/><ellipse cx="11" cy="12" rx="10" ry="7" fill="#0f2c0c" stroke="#8cd05c" stroke-width="1.5" transform="rotate(35 11 12)"/><circle cx="11" cy="10" r="5" fill="#d8d0c8"/><circle cx="11" cy="10" r="4" fill="#b81f2c"/><path d="m9.500 8.500 3 3m0-3-3 3" stroke="#fff"/></svg><i class="absolute bottom-[5px] h-[2px] w-[5px] rounded bg-[#999]"></i></button>
                <button aria-label="Excel"><svg class="size-[22px]" viewBox="0 0 22 22"><rect x="6" y="1" width="16" height="20" rx="1" fill="#1f9d57"/><path d="M14 1h8v10h-8z" fill="#36c47a"/><path d="M6 11h16v10H6z" fill="#156b3a"/><rect y="5" width="12" height="12" rx="1" fill="#10703b"/><path d="m3.500 8 5 6m0-6-5 6" stroke="#fff" stroke-width="1.6"/></svg><i class="absolute bottom-[5px] h-[2px] w-[5px] rounded bg-[#999]"></i></button>
                <button aria-label="Плеер"><svg class="size-[18px]" viewBox="0 0 18 18"><rect width="18" height="18" rx="1" fill="#8fc4e2"/><circle cx="8" cy="9" r="6.500" fill="#e87a1c"/><path d="m6 5 6 4-6 4z" fill="#fff"/></svg><i class="absolute bottom-[5px] h-[2px] w-[5px] rounded bg-[#999]"></i></button>
            </div>
            <div class="text-right leading-[15px] text-[#d5d5d5]"><p>23:31</p><p>23.11.2024</p></div>
        </div>
    </main>

    <svg class="absolute left-[1516px] top-[783px] h-5 w-3" viewBox="0 0 12 20"><path d="M1 1v15l3.500-3 2.500 6 2.500-1L7 12h4.500z" fill="#fff" stroke="#333"/></svg>

    <!-- Подпись к файлу -->
    <div class="absolute bottom-2 left-[17px] text-base leading-[27px] text-[#c2c3c3]">
        <p class="font-semibold">2024_11_23_покерная_раскраска_ПРЕФЛОП.mp4 1 из 16</p>
        <p class="text-[#a3a4a4]">До Результата. Младшая группа&nbsp;&nbsp; 14.03.2025 в 17:20</p>
    </div>

    <!-- Плеер -->
    <div class="absolute bottom-[7px] left-1/2 flex h-[90px] w-[600px] -translate-x-1/2 flex-col rounded-xl bg-[#090909] px-[17px] text-[15px] text-[#c8c8c8]">
        <div class="relative flex h-[54px] items-center">
            <svg class="h-[18px] w-[22px]" viewBox="0 0 22 18"><path d="M0 6h4l7-6v18l-7-6H0z" fill="currentColor"/><path d="M14 5c2 2 2 6 0 8M17 1.500c4 4 4 11 0 15" fill="none" stroke="currentColor" stroke-width="1.5"/></svg>
            <div class="ml-3 h-1 w-[94px] overflow-hidden rounded bg-[#262626]"><div class="h-full bg-[#c8c8c8]" style="width:62%"></div></div>
            <button aria-label="Пауза" class="absolute left-1/2 -translate-x-1/2"><svg class="h-[26px] w-[23px]" viewBox="0 0 23 26" fill="currentColor"><rect width="8" height="26" rx="2"/><rect x="15" width="8" height="26" rx="2"/></svg></button>
            <div class="ml-auto mr-px flex items-center gap-6">
                <svg class="size-5" viewBox="0 0 20 20" fill="none" stroke="currentColor" stroke-width="1.6"><path d="M12 1h7v7M19 1l-7 7M8 19H1v-7M1 19l7-7"/></svg>
                <svg class="size-[22px]" viewBox="0 0 22 22" fill="none" stroke="currentColor" stroke-width="1.6"><path d="M9 1.500H4A2.500 2.500 0 0 0 1.500 4v14A2.500 2.500 0 0 0 4 20.500h14a2.500 2.500 0 0 0 2.500-2.500v-5"/><rect x="12.500" y="1.500" width="8" height="8" rx="1"/></svg>
                <svg class="size-[23px]" viewBox="0 0 24 24" fill="none" stroke="currentColor" stroke-width="1.7"><circle cx="12" cy="12" r="3.600"/><path d="M9.500 2.500a3.500 3.500 0 0 1 5 0c.8 1 1.800 1.500 3.300 1.500a3.500 3.500 0 0 1 2.500 4.300c-.4 1.400-.4 2.400 0 3.700.4 1.300.4 2.400 0 3.700A3.500 3.500 0 0 1 17.800 20c-1.500 0-2.500.5-3.300 1.500a3.500 3.500 0 0 1-5 0C8.700 20.500 7.700 20 6.200 20a3.500 3.500 0 0 1-2.500-4.300c.4-1.300.4-2.300 0-3.700-.4-1.300-.4-2.300 0-3.700A3.500 3.500 0 0 1 6.200 4c1.500 0 2.500-.5 3.300-1.500z"/></svg>
            </div>
        </div>
        <div class="flex items-center gap-3 leading-7">
            <span>33:58</span>
            <div class="h-1 flex-1 overflow-hidden rounded bg-[#3f3f3f]"><div class="h-full bg-[#c8c8c8]" style="width:97%"></div></div>
            <span>−01:03</span>
        </div>
    </div>
    <div class="absolute bottom-5 right-5 flex items-center gap-[34px] text-[#b0b0b0]">
        <button aria-label="Скачать"><svg class="h-7 w-[22px]" viewBox="0 0 22 28" fill="none" stroke="currentColor" stroke-width="1.8"><path d="M11 1v19M4 13l7 7 7-7M1 26h20"/></svg></button>
        <button aria-label="Повернуть"><svg class="size-6" viewBox="0 0 24 24" fill="none" stroke="currentColor" stroke-width="1.8"><path d="m1 13 6-6 6 6-6 6zM12 4a9 9 0 1 1-1 18.500"/><path d="M13.500.500v7L9 4z" fill="currentColor"/></svg></button>
        <button aria-label="Меню"><svg class="h-6 w-5" viewBox="0 0 20 24" fill="currentColor"><circle cx="11" cy="3" r="2.500"/><circle cx="11" cy="12" r="2.500"/><circle cx="11" cy="21" r="2.500"/></svg></button>
    </div>

    <script>
        // Папки чатов слева
        const folders = ['Работа', 'Покер<br>(лудка', 'ММА', '1С (чаты)', 'Новости', 'Мои чаты', 'Соседи', 'Кэш<br>PokerAbi'];
        document.getElementById('folders').innerHTML = `
            <svg class="mx-auto h-4 w-[23px]" viewBox="0 0 23 16" stroke="currentColor"><path d="M0 1h23M0 8h23M0 15h23"/></svg>
            <svg class="mx-auto mt-[42px] h-7 w-[34px]" viewBox="0 0 34 28" fill="currentColor"><ellipse cx="13" cy="11" rx="13" ry="11"/><path d="m3 16-2 8 9-3zM28 8c8 4 8 11 4 15l2 5-7-2c-5 1-9-1-11-3 8-1 13-7 12-15z"/></svg>
            <div class="mt-[5px]">Все чаты</div>` +
            folders.map((name, i) => `
            <div class="${i === 7 ? 'text-[#253541]' : ''}">
                <svg class="mx-auto mt-[27px] h-[22px] w-[28px]"><use href="#dirFolder"/></svg>
                <div class="mt-[9px]">${name}</div>
            </div>`).join('') + `
            <svg class="mx-auto mt-[27px] h-6 w-7" viewBox="0 0 28 24" fill="none" stroke="currentColor" stroke-width="2"><circle cx="23" cy="5" r="4"/><path d="M1 5h18M9 19h18"/><circle cx="5" cy="19" r="4"/></svg>
            <div class="mt-[5px]">Ред.</div>`;

        // Список диапазонов
        const ranges = [
            ['MP IP'], ['CO IP'], ['BU IP'],
            ['UTG OOP', 'text-[#d455d8]'], ['MP OOP', 'text-[#d455d8]'], ['CO OOP', 'text-[#d455d8]'], ['SB OOP', 'text-[#d455d8]'],
            ['3BET', 'font-bold text-[#333] -ml-2'], ['ct vs', 'font-bold text-[#333] -ml-1'], ['ct vs 2.5bb', 'font-bold text-[#333] -ml-1'],
            ['vs UTG'], ['vs MP'], ['vs CO'], ['vs BU'], ['vs SB'],
            ['UTG', 'text-[#6fc04c]'],
        ];
        document.getElementById('ranges').innerHTML = ranges.map(([t, cls]) => `<li class="${cls || ''}">${t}</li>`).join('');

        // Матрица стартовых рук
        const R = 'AKQJT98765432'.split('');
        const active = ['AA', 'AQs', 'AJs', 'KQs', 'KJs', 'AQo', 'QJs', 'TT', '99', '88', '76s', '65s', '54s'];
        const green = ['AA', 'AQo', 'TT', '99', '88'];
        const blue = ['76s', '65s', '54s'];
        let html = '';
        for (let r = 0; r < 13; r++) {
            for (let c = 0; c < 13; c++) {
                const kind = r === c ? 'pair' : c > r ? 's' : 'o';
                const name = kind === 'pair' ? R[r] + R[r] : kind === 's' ? R[r] + R[c] + 's' : R[c] + R[r] + 'o';
                const on = active.includes(name);
                const skin = {
                    pair: on ? 'from-[#2d9cf5] to-[#0a62d8] border-[#0c4f9e] text-[#cfe6fb]' : 'from-[#bfe6fd] to-[#b3d8fa] border-[#c3d3e0] text-[#8fa0ae]',
                    s: on ? 'from-[#f8e64c] to-[#dfbc00] border-[#a08c1c] text-[#4d4820]' : 'from-[#fff6b8] to-[#fbe88c] border-[#e6cf96] text-[#9f9b80]',
                    o: on ? 'from-[#f4372c] to-[#dc1010] border-[#a81c1c] text-[#fbd0cc]' : 'from-[#fcd0d0] to-[#f9bcbc] border-[#eab4b0] text-[#ab9090]',
                }[kind];
                const mark = green.includes(name) ? '<i class="absolute bottom-[2px] left-[2px] h-[3px] w-3 bg-[#3ee04c]"></i>'
                    : blue.includes(name) ? '<i class="absolute bottom-[2px] left-[2px] h-1 w-2 border border-[#2a5f98] bg-[#9ccdf5]"></i>' : '';
                html += `<div class="relative flex items-center justify-center rounded-sm border bg-gradient-to-b ${skin}">${name}${mark}</div>`;
            }
        }
        document.getElementById('hands').innerHTML = html;

        // Быстрый доступ в проводнике
        const ico = {
            folder: '<svg class="h-[14px] w-[15px] shrink-0"><use href="#folder"/></svg>',
            down: '<svg class="size-[14px] shrink-0" viewBox="0 0 14 14" fill="none" stroke="#3ecf9a" stroke-width="1.5"><path d="M7 0v10M3 6l4 4 4-4M2 13h10"/></svg>',
            doc: '<svg class="size-[14px] shrink-0" viewBox="0 0 14 14"><rect x="2" width="11" height="14" rx="1" fill="#8fa6c2"/><path d="M4 4h4M4 6.500h7M4 9h7M9 3.500h2" stroke="#fff"/></svg>',
            pic: '<svg class="size-[14px] shrink-0" viewBox="0 0 14 14"><rect x="1" width="13" height="13" rx="1" fill="#1d8fdc"/><path d="m2 12 5-6 6 6z" fill="#fff"/><circle cx="11" cy="3.500" r="1" fill="#fff"/></svg>',
            music: '<svg class="size-[14px] shrink-0" viewBox="0 0 14 14"><circle cx="7" cy="7" r="7" fill="#d8685c"/><path d="M7.500 9.500V3l2.500 1.500" stroke="#fff" fill="none"/><circle cx="6" cy="9.500" r="1.700" fill="#fff"/></svg>',
            video: '<svg class="size-[14px] shrink-0" viewBox="0 0 14 14"><rect x="1" width="13" height="14" rx="1" fill="#8a3fe0"/><path d="M2.500 1v12M12.500 1v12" stroke="#c9a3f5" stroke-dasharray="1.500 1.500"/><path d="m5.500 4 5 3-5 3z" fill="#fff"/></svg>',
            pc: '<svg class="size-[14px] shrink-0" viewBox="0 0 14 14"><path d="M0 1h14v10H0z" fill="#1fa5d6"/><path d="M7 11v2M4 13.500h6" stroke="#aaa"/></svg>',
            diskWin: '<svg class="size-[14px] shrink-0" viewBox="0 0 14 14"><path d="M1 8 3 5.500h9L14 8z" fill="#ccc"/><path d="M1 8h13v4H1z" fill="#8f9294"/><path d="M0 0h3v3H0zM3.500 0h3v3h-3zM0 3.500h3v3H0zM3.500 3.500h3v3h-3z" fill="#2ea4ea"/></svg>',
            disk: '<svg class="size-[14px] shrink-0" viewBox="0 0 14 14"><path d="M1 7 3 4h9l2 3z" fill="#ddd"/><path d="M1 7h13v4H1z" fill="#8f9294"/><path d="M2 9h2" stroke="#3ecf5a"/></svg>',
            net: '<svg class="size-[14px] shrink-0" viewBox="0 0 14 14"><path d="M3 3h11v8H3z" fill="#1fa5d6"/><circle cx="4" cy="4" r="4" fill="#8fc4e2"/><path d="M8 11v2M5 13.500h6" stroke="#aaa"/></svg>',
        };
        const places = [
            ['down', 'Загрузки', 'pin'], ['doc', 'Документы', 'pin'], ['pic', 'Изображения', 'pin'], ['music', 'Музыка', 'pin'], ['video', 'Видео', 'pin'],
            ['folder', 'тренировки', 'pin'], ['folder', 'покерная раскраска', 'pin'], ['folder', 'видео'], ['folder', 'покерная раскраска'],
            null,
            ['pc', 'Этот компьютер', 'open'], ['diskWin', 'Локальный диск', 'sub'], ['disk', 'Files (D:)', 'sub'], ['net', 'Сеть', 'closed'],
        ];
        document.getElementById('places').innerHTML = places.map(p => {
            if (!p) return '<li class="flex items-center px-[7px]"><span class="h-px w-full bg-[#303031]"></span></li>';
            const [i, name, kind] = p;
            const sel = name.startsWith('Files') ? ' rounded-sm bg-[#333334]' : '';
            const arrow = kind === 'open' ? '<svg class="ml-[7px] mr-[11px] size-[10px] shrink-0 text-[#ccc]"><use href="#chev"/></svg>'
                : kind === 'closed' ? '<svg class="ml-2 mr-3 size-2 shrink-0 text-[#999]"><use href="#chevRight"/></svg>'
                : kind === 'sub' ? '<svg class="ml-4 mr-3 size-2 shrink-0 text-[#999]"><use href="#chevRight"/></svg>'
                : '<span class="w-7 shrink-0"></span>';
            const pin = kind === 'pin' ? '<svg class="ml-[2px] mr-[2px] size-[10px] shrink-0"><use href="#pin"/></svg>' : '';
            return `<li class="flex items-center overflow-hidden${sel}">${arrow}${ico[i]}<span class="ml-1 flex-1 overflow-hidden whitespace-nowrap">${name}</span>${pin}</li>`;
        }).join('');

        // Файлы
        const files = [
            ['исходники', '23.11.2024 22:58', ''],
            ['1диапазоны оупенРейза', '23.11.2024 21:38', '19 КБ'],
            ['2диапазон защиты&nbsp; BB 2023', '23.11.2024 22:28', '17 КБ'],
            ['3диапазон защиты&nbsp; SB 2023', '23.11.2024 22:25', '17 КБ'],
            ['4диапазоны 3BET iP 2023', '23.11.2024 22:19', '16 КБ'],
            ['5диапазоны защиты против 3BETа OoP', '23.11.2024 22:17', '16 КБ'],
            ['6диапазоны защиты vs 4БЕТ на блайндах', '23.02.2024 12:16', '17 КБ'],
            ['7диапазоны Оупен 4БЕТА', '22.11.2024 18:11', '16 КБ'],
        ];
        document.getElementById('files').innerHTML = files.map(([name, date, size], i) => `
            <tr class="h-[25px] ${i === 6 ? 'outline -outline-offset-2 outline-[#5a5a5a]' : ''}">
                <td><div class="flex items-center text-[#ececec]"><svg class="ml-[3px] h-[15px] w-4 shrink-0"><use href="${size ? '#xls' : '#folder'}"/></svg><span class="ml-[3px]">${name}</span></div></td>
                <td class="pl-[5px]">${date}</td>
                <td class="pl-[5px]">${size ? 'Лист Microsoft Ex...' : 'Папка с файлами'}</td>
                <td class="pr-[7px] text-right">${size}</td>
            </tr>`).join('');

        // Лист Excel: колонки A..AQ
        const letters = [];
        for (let i = 0; i < 43; i++) letters.push(i < 26 ? String.fromCharCode(65 + i) : 'A' + String.fromCharCode(39 + i));
        const widthClass = i => i === 0 ? 'w-[26px]' : i === 14 || i === 28 ? 'w-[40px]' : i === 42 ? 'w-[27px]' : i === 13 || i === 27 || i === 41 ? 'w-[24px]' : 'w-[25px]';
        const B = 1, P = 15, AD = 29;

        const values = {};
        const put = (row, start, list) => list.split(' ').forEach((v, i) => { if (v !== '.') values[row + ':' + (start + i)] = v; });
        put(5, B, 'AA AKs'); put(6, B, 'AKo KK');
        for (const s of [P, AD]) {
            put(5, s, 'AA AKs AQs AJs . . . . . A5s'); put(6, s, 'AKo KK KQs'); put(7, s, '. . QQ'); put(8, s, '. . . JJ');
        }
        put(12, P + 8, '76s'); put(13, P + 9, '65s');
        for (const s of [B, P, AD]) {
            put(18, s, s === P ? 'AA AKs AQs AJs ATs . . . . A5s' : s === B ? 'AA AKs AQs AJs . . . . . A5s' : 'AA AKs AQs AJs');
            put(19, s, 'AKo KK KQs KJs');
            put(20, s, s === B ? '. . QQ' : s === P ? 'AQo . QQ' : 'AQo . QQ QJs');
            put(21, s, s === B ? '. . . JJ' : '. . . JJ JTs');
            put(22, s, '. . . . TT');
            if (s !== B) { put(23, s + 5, '99'); put(24, s + 6, '88'); }
            put(25, s + 8, '76s'); put(26, s + 9, '65s');
            put(33, s, s === AD ? 'AA AKs AQs AJs ATs' : 'AA AKs AQs AJs . . . . . A5s');
            put(34, s, 'AKo KK KQs KJs');
        }
        put(27, P + 10, '54s');

        // Объединённые подписи: строка:колонка -> [ширина, текст, классы]
        const head = 'bg-[#d9d9db] pl-[2px] text-[11px] font-bold';
        const note = 'text-xs leading-3 font-bold';
        const spans = {
            '1:14': [15, 'Я 3BET(на BB)---что делать vs 4BET', 'bg-[#d9d9db] pl-[14px] text-[21px] leading-5 font-bold'],
            '3:1': [3, 'vs 4BET 2%', head],
            '3:15': [3, 'vs 4BET 2.8%', head], '3:18': [9, '(vs EP по нашей префлоп моделе)', note + ' pl-[13px]'],
            '3:29': [3, 'vs 4BET 3.4%', head], '3:32': [9, '(vs MP по нашей префлоп моделе)', note + ' pl-[13px]'],
            '16:1': [3, 'vs 4BET 4%', head], '16:4': [9, '(vs CO по нашей префлоп моделе)', note + ' pl-[3px]'],
            '16:15': [3, 'vs 4BET 5.3%', head], '16:18': [9, '(vs BU по нашей префлоп моделе)', note + ' pl-[13px]'],
            '16:29': [3, 'vs 4BET 5.5%', head], '16:32': [9, '(vs SB по нашей префлоп моделе)', note + ' pl-[13px]'],
            '27:2': [3, 'кол 4BET', 'pl-1 align-bottom'], '28:2': [3, '5BET', 'pl-5 align-bottom'], '29:2': [3, '50/50', 'pl-[7px]'],
            '29:16': [12, 'Я 3BET(на SB)---что делать vs 4BET', 'bg-[#d9d9db] pl-[11px] text-[15px] leading-4'],
            '31:1': [4, 'vs 4BET 2.8%-3.4%', head], '31:5': [9, '(vs EP/MP по нашей преф моделе)', note + ' pl-4'],
            '31:15': [3, 'vs 4BET 4%', head], '31:18': [9, '(vs CO по нашей префлоп моделе)', note + ' pl-[3px]'],
            '31:29': [3, 'vs 4BET 5.3%', head], '31:32': [9, '(vs BU по нашей префлоп моделе)', note + ' pl-[13px]'],
            '27:29': [13, '', ''],
        };

        const inBlock = (r, c) => {
            const k = c >= 1 && c <= 13 ? 0 : c >= 15 && c <= 27 ? 1 : c >= 29 && c <= 41 ? 2 : -1;
            if (c === 1 && r >= 27 && r <= 29) return true;
            if (r === 27 && c === P + 10) return true;
            if (k < 0) return false;
            if (k === 0 && r === 26) return c >= 7;
            return (r >= 5 && r <= 13) || (r >= 18 && r <= 26) || r >= 33;
        };
        const diagonal = '<svg class="absolute inset-0 size-full" viewBox="0 0 24 20" preserveAspectRatio="none"><path d="M0 20 24 0" stroke="#222"/></svg>';

        let sheet = `<colgroup><col class="w-[18px]">${letters.map((_, i) => `<col class="${widthClass(i)}">`).join('')}</colgroup>
            <thead><tr class="h-[11px] bg-[#262626] text-[8px] leading-[11px] text-[#c5c5c5]"><th></th>${letters.map(l => `<th class="border-l border-[#454545] font-normal">${l}</th>`).join('')}</tr></thead><tbody>`;
        for (let r = 1; r <= 34; r++) {
            sheet += `<tr class="${r % 2 ? 'h-[21px]' : 'h-[20px]'}"><th class="border-b border-[#4a4a4a] bg-[#262626] pr-[3px] text-right align-bottom font-normal text-[#c5c5c5]">${r}</th>`;
            for (let c = 0; c < 43; c++) {
                const sp = spans[r + ':' + c];
                const n = sp ? sp[0] : 1;
                const last = c + n - 1;
                const v = values[r + ':' + c];
                let right = inBlock(r, last) || inBlock(r, last + 1) ? 'border-r-black' : 'border-r-[#dcdcdc]';
                let bottom = inBlock(r, c) || inBlock(r + 1, c) ? 'border-b-black' : 'border-b-[#dcdcdc]';
                let cls = sp ? sp[2] + ' whitespace-nowrap overflow-visible' : 'text-center';
                if (sp && sp[1] && sp[2].includes('bg-')) right = 'border-r-[#d9d9db]';
                if (r >= 16 && r <= 27 && c === 28) right = 'border-r-2 border-r-black';
                if (r === 15 && c >= 29 && c <= 41) bottom = 'border-b-2 border-b-black';
                if (r === 27 && c === 29) bottom = 'border-b-2 border-b-black';
                if (r >= 16 && r <= 27 && last === 41) right = 'border-r-2 border-r-black';
                if (v) cls += r !== 34 && (v === 'KJs' || (v === 'TT' && c === 5)) ? ' bg-[#d0cdd0]' : ' bg-[#d9d9db]';
                if (c === 1 && r === 27) cls += ' bg-[#ffff00]';
                if (c === 1 && r === 28) cls += ' bg-[#e86a61]';
                const diag = c === 1 && (r === 6 || r === 29) ? diagonal : '';
                sheet += `<td colspan="${n}" class="relative border-b border-r ${right} ${bottom} ${cls}">${sp ? sp[1] : v || ''}${diag}</td>`;
                c = last;
            }
            sheet += '</tr>';
        }
        document.getElementById('sheet').innerHTML = sheet + '</tbody>';
    </script>
</body>
</html>
